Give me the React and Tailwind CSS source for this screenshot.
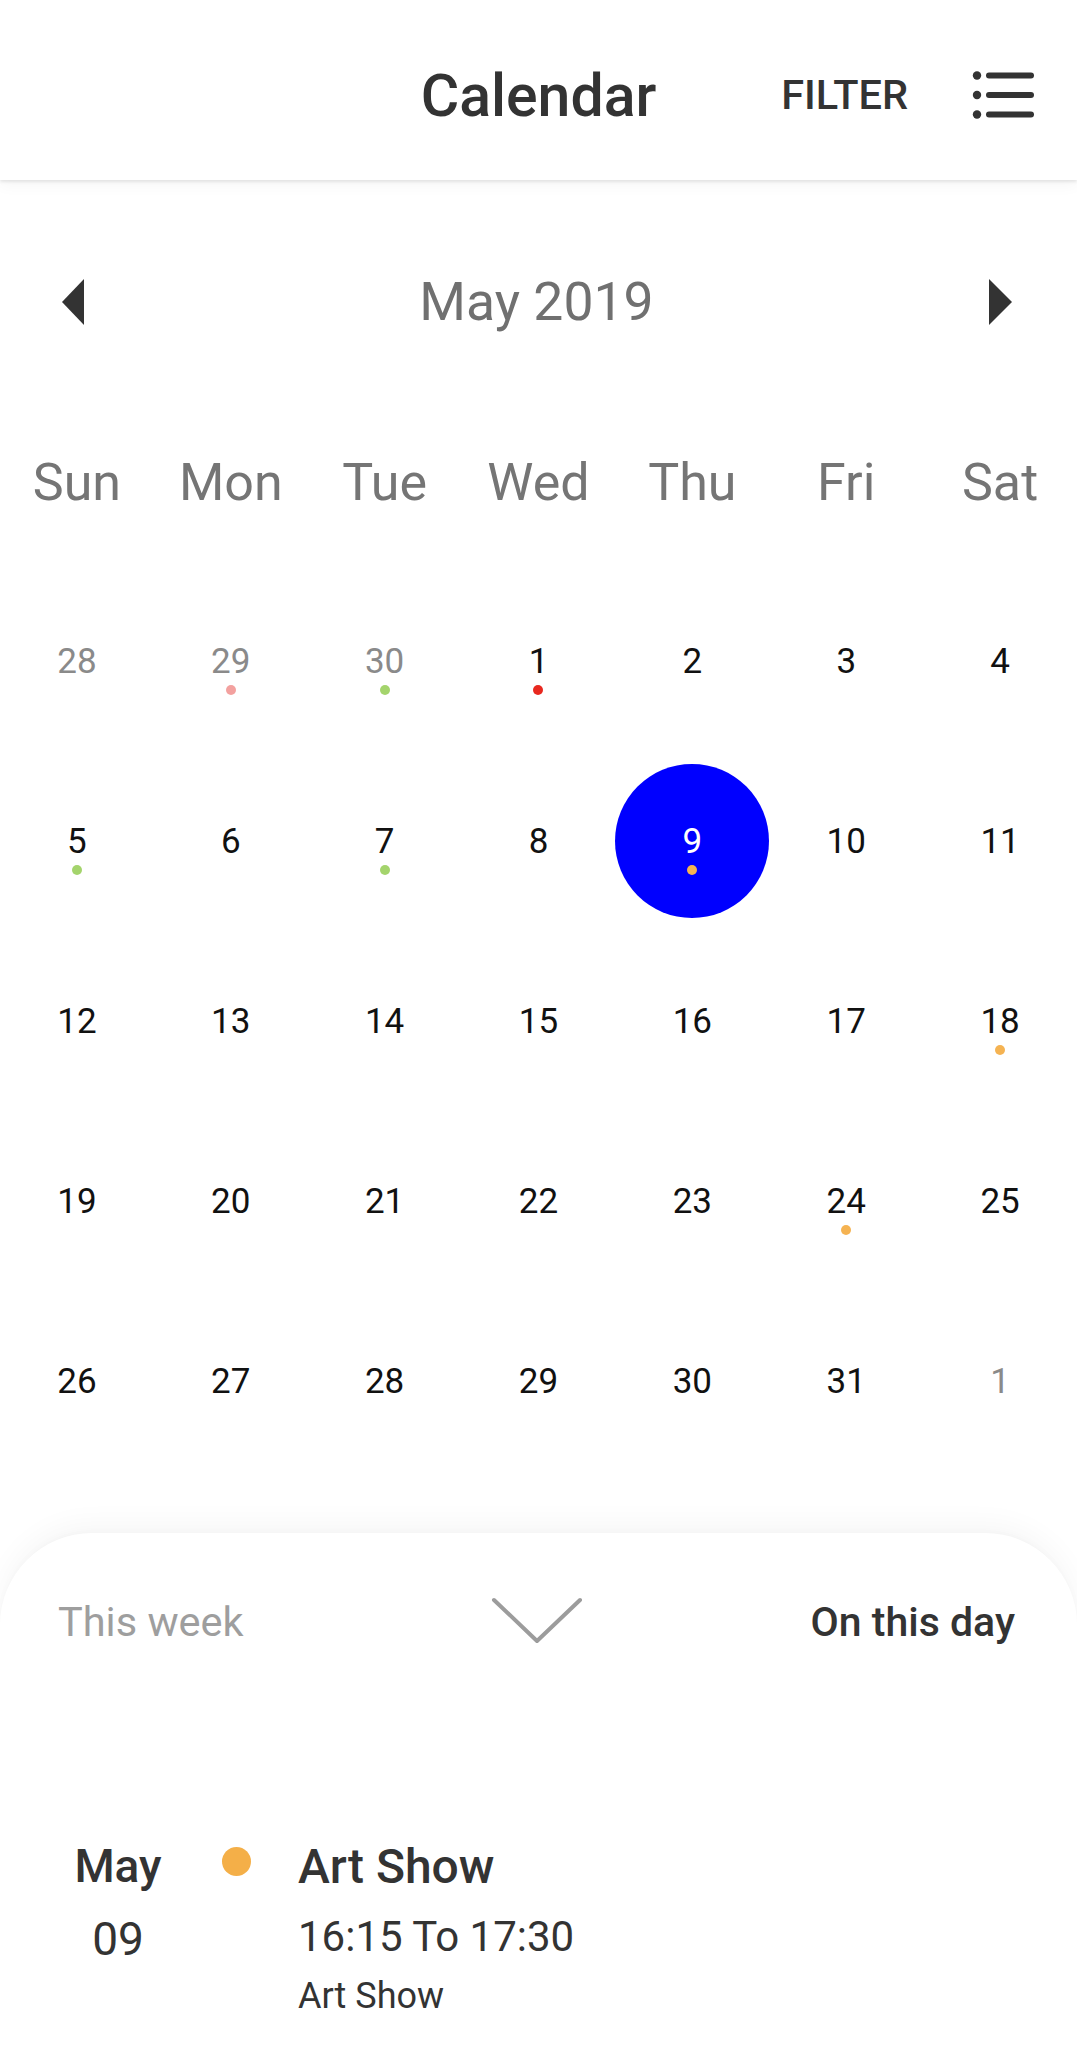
import React from "react";

const weekdays = ["Sun", "Mon", "Tue", "Wed", "Thu", "Fri", "Sat"];

const PINK = "#f3a19f";
const GREEN = "#a4d46c";
const RED = "#e8281f";
const ORANGE = "#f5b352";

const rows = [
  [
    { d: 28, muted: true },
    { d: 29, muted: true, dot: PINK },
    { d: 30, muted: true, dot: GREEN },
    { d: 1, dot: RED },
    { d: 2 },
    { d: 3 },
    { d: 4 },
  ],
  [
    { d: 5, dot: GREEN },
    { d: 6 },
    { d: 7, dot: GREEN },
    { d: 8 },
    { d: 9, selected: true, dot: ORANGE },
    { d: 10 },
    { d: 11 },
  ],
  [
    { d: 12 },
    { d: 13 },
    { d: 14 },
    { d: 15 },
    { d: 16 },
    { d: 17 },
    { d: 18, dot: ORANGE },
  ],
  [
    { d: 19 },
    { d: 20 },
    { d: 21 },
    { d: 22 },
    { d: 23 },
    { d: 24, dot: ORANGE },
    { d: 25 },
  ],
  [
    { d: 26 },
    { d: 27 },
    { d: 28 },
    { d: 29 },
    { d: 30 },
    { d: 31 },
    { d: 1, muted: true },
  ],
];

function MenuIcon() {
  return (
    <svg width="64" height="48" viewBox="0 0 64 48">
      <circle cx="5" cy="4.5" r="4.2" fill="#333" />
      <circle cx="5" cy="24" r="4.2" fill="#333" />
      <circle cx="5" cy="43.5" r="4.2" fill="#333" />
      <line x1="17" y1="4.5" x2="59" y2="4.5" stroke="#333" strokeWidth="6" strokeLinecap="round" />
      <line x1="17" y1="24" x2="59" y2="24" stroke="#333" strokeWidth="6" strokeLinecap="round" />
      <line x1="17" y1="43.5" x2="59" y2="43.5" stroke="#333" strokeWidth="6" strokeLinecap="round" />
    </svg>
  );
}

function DayCell({ cell }) {
  return (
    <div className="relative flex h-[180px] items-center justify-center">
      {cell.selected && (
        <div className="absolute left-1/2 top-1/2 h-[154px] w-[154px] -translate-x-1/2 -translate-y-1/2 rounded-full bg-[#0000ff]" />
      )}
      <span
        className={
          "relative text-[35px] leading-none " +
          (cell.selected ? "text-white" : cell.muted ? "text-[#8a8a8a]" : "text-[#111111]")
        }
      >
        {cell.d}
      </span>
      {cell.dot && (
        <span
          className="absolute left-1/2 top-1/2 mt-[24px] h-[10px] w-[10px] -translate-x-1/2 rounded-full"
          style={{ backgroundColor: cell.dot }}
        />
      )}
    </div>
  );
}

export default function App() {
  return (
    <div className="flex h-[2070px] w-full flex-col overflow-hidden bg-white font-['Roboto','Noto_Sans',sans-serif]">
      {/* Header */}
      <header className="relative z-10 grid h-[180px] shrink-0 grid-cols-[1fr_auto_1fr] items-center bg-white pt-[10px] shadow-[0_2px_3px_rgba(0,0,0,0.09),0_6px_14px_rgba(0,0,0,0.035)]">
        <div />
        <h1 className="text-[59px] font-medium leading-none text-[#333333]">Calendar</h1>
        <div className="flex items-center justify-end pr-[41px]">
          <span className="text-[41.5px] font-medium leading-none text-[#333333]">FILTER</span>
          <div className="ml-[64px] flex items-center">
            <MenuIcon />
          </div>
        </div>
      </header>

      {/* Month navigation */}
      <div className="flex h-[240px] shrink-0 items-center justify-between px-[62px] pr-[65px] pt-[4px]">
        <svg width="22" height="46" viewBox="0 0 22 46">
          <polygon points="22,0 0,23 22,46" fill="#333" />
        </svg>
        <span className="text-[53.5px] leading-none text-[#707070]">May 2019</span>
        <svg width="23" height="46" viewBox="0 0 23 46">
          <polygon points="0,0 23,23 0,46" fill="#333" />
        </svg>
      </div>

      {/* Weekdays */}
      <div className="grid h-[124px] shrink-0 grid-cols-7 items-center pt-[2px]">
        {weekdays.map((w) => (
          <div key={w} className="text-center text-[52px] leading-none text-[#757575]">
            {w}
          </div>
        ))}
      </div>

      {/* Dates */}
      <div className="mt-[27px] grid shrink-0 grid-cols-7">
        {rows.flat().map((cell, i) => (
          <DayCell key={i} cell={cell} />
        ))}
      </div>

      {/* Bottom sheet */}
      <div className="mt-[62px] flex flex-1 flex-col rounded-t-[92px] bg-white shadow-[0_-10px_28px_rgba(0,0,0,0.035),0_-2px_6px_rgba(0,0,0,0.02)]">
        <div className="grid h-[178px] grid-cols-[1fr_auto_1fr] items-center px-[58px] pr-[62px]">
          <span className="justify-self-start text-[41.5px] leading-none text-[#9e9e9e]">This week</span>
          <svg width="92" height="48" viewBox="0 0 92 48" className="mt-[-2px]">
            <polyline points="3,3 46,44 89,3" fill="none" stroke="#9c9c9c" strokeWidth="4" strokeLinecap="round" strokeLinejoin="round" />
          </svg>
          <span className="justify-self-end text-[41px] font-medium leading-none text-[#333333]">On this day</span>
        </div>

        <div className="mt-[132px] flex items-start">
          <div className="ml-[40px] flex w-[156px] flex-col items-center text-[#333333]">
            <span className="text-[46px] font-medium leading-none">May</span>
            <span className="mt-[27px] text-[46px] leading-none">09</span>
          </div>
          <span className="ml-[26px] mt-[4px] h-[29px] w-[29px] shrink-0 rounded-full bg-[#f4af48]" />
          <div className="ml-[47px] flex flex-col text-[#333333]">
            <span className="text-[48px] font-medium leading-none">Art Show</span>
            <span className="mt-[25px] text-[42px] leading-none">16:15 To 17:30</span>
            <span className="mt-[20px] text-[36px] leading-none">Art Show</span>
          </div>
        </div>
      </div>
    </div>
  );
}
